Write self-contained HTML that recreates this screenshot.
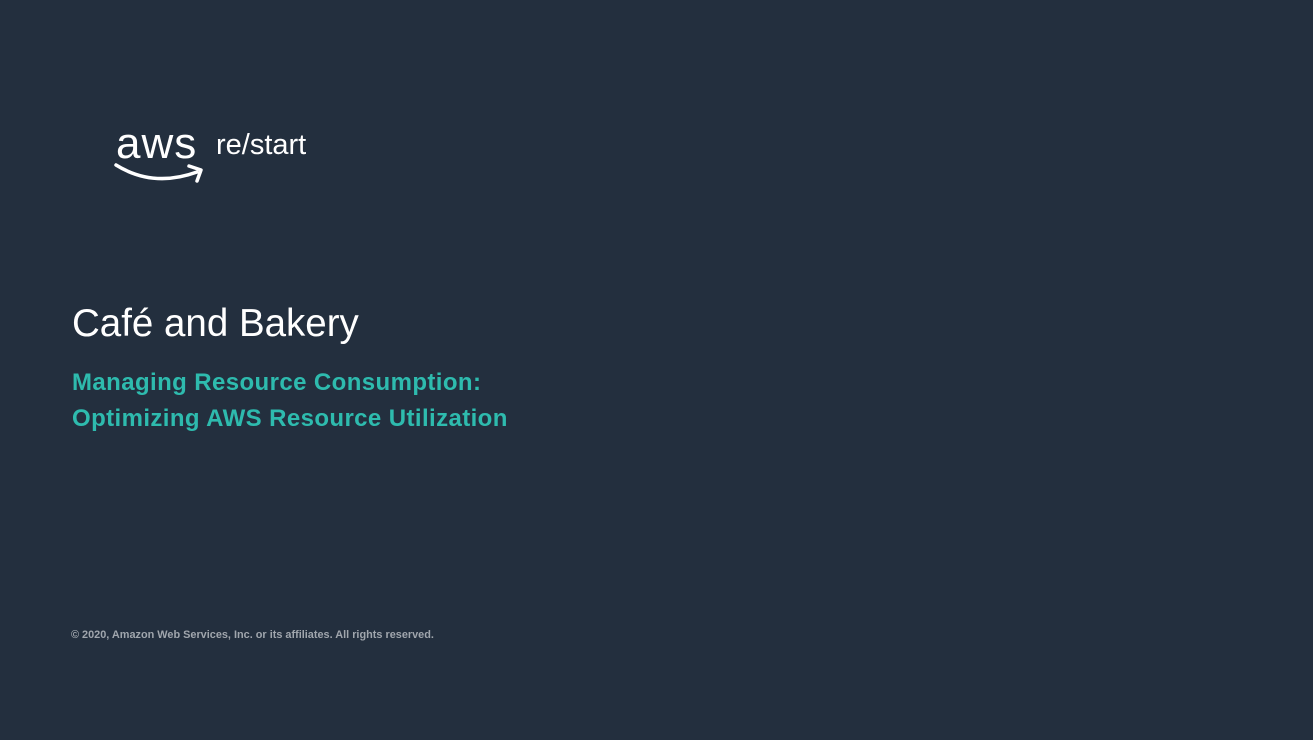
<!DOCTYPE html>
<html><head><style>
body{margin:0;width:1313px;height:740px;background:#232f3e;overflow:hidden;font-family:"Liberation Sans",sans-serif;position:relative}
.t{position:absolute;white-space:nowrap}
</style></head><body>
<div class="t" style="left:116px;top:119px;font-size:44px;color:#fff;letter-spacing:1px">aws</div>
<svg style="position:absolute;left:113px;top:158px" width="95" height="28" viewBox="0 0 95 28">
<path d="M3 7 Q40 30 84 14" stroke="#fff" stroke-width="3.5" fill="none" stroke-linecap="round"/>
<path d="M76 8 L88 12 L84 23" stroke="#fff" stroke-width="3.5" fill="none" stroke-linecap="round" stroke-linejoin="round"/>
</svg>
<div class="t" style="left:216px;top:129px;font-size:29px;color:#fff">re/start</div>
<div class="t" style="left:72px;top:302px;font-size:38.5px;color:#fff">Café and Bakery</div>
<div class="t" style="left:72px;top:365px;font-size:24px;color:#2ebbae;font-weight:bold;line-height:36px;letter-spacing:0.4px">Managing Resource Consumption:<br>Optimizing AWS Resource Utilization</div>
<div class="t" style="left:71px;top:629px;font-size:10.9px;color:#a0a6ad;font-weight:bold">© 2020, Amazon Web Services, Inc. or its affiliates. All rights reserved.</div>
</body></html>
